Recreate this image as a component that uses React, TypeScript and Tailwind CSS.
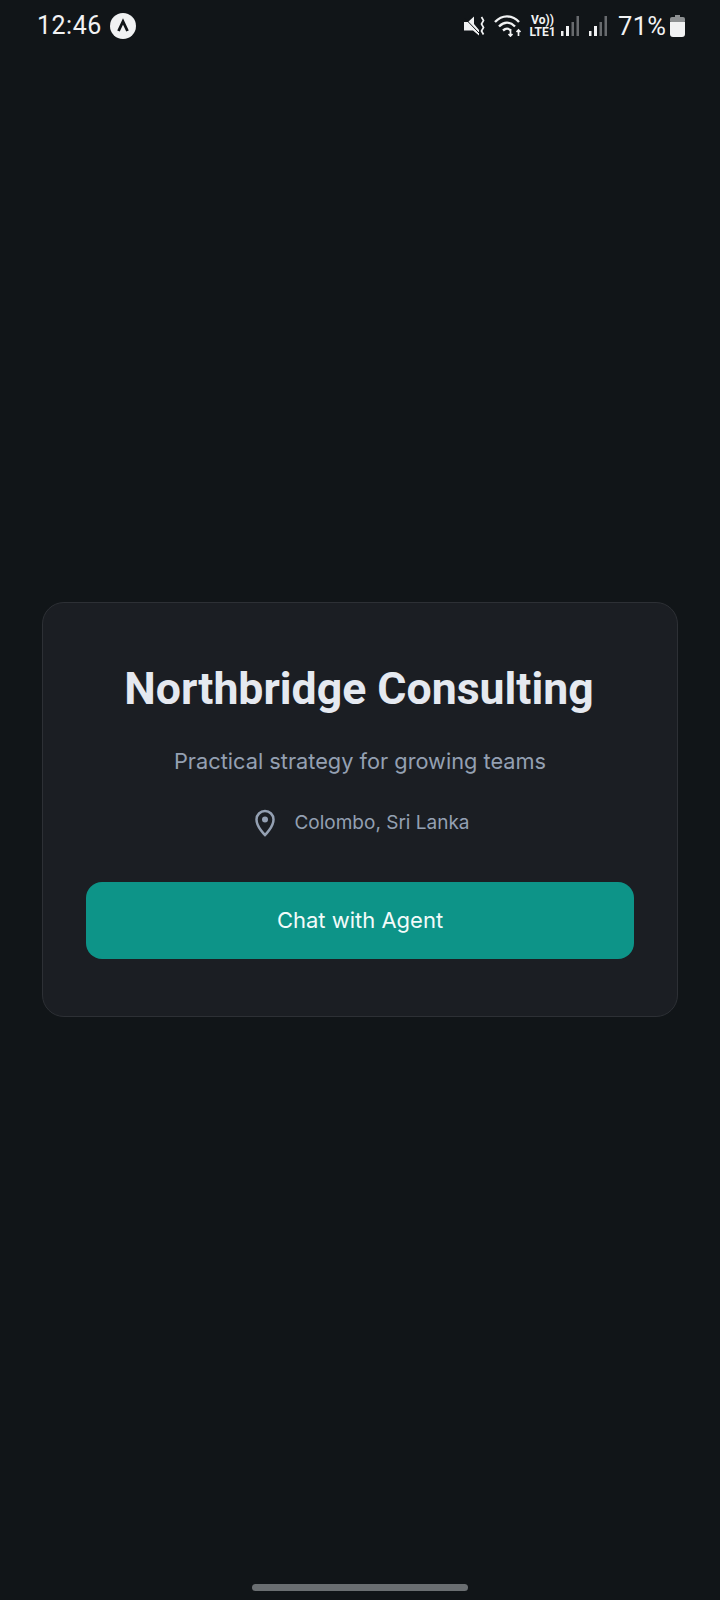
export default function App() {
  return (
    <div className="w-[720px] h-[1600px] bg-[#111518] flex flex-col overflow-hidden font-['Inter',sans-serif]">
      <div className="h-[48px] shrink-0 flex items-start justify-between pl-[37px] pr-[35px] pt-[11px] text-[#f1f2f3]">
        <div className="flex items-center gap-[8px]">
          <span className="font-['Roboto',sans-serif] text-[25px] leading-[30px] tracking-[0.5px]">12:46</span>
          <svg width="26" height="26" viewBox="0 0 26 26">
            <circle cx="13" cy="13" r="13" fill="#f1f2f3" />
            <path d="M8.500 18 L13 8.500 L17.500 18" fill="none" stroke="#111518" strokeWidth="2.800" />
          </svg>
        </div>
        <div className="flex items-center h-[30px]">
          <svg width="21" height="20" viewBox="0 0 21 20" className="mr-[9px]" fill="#f1f2f3">
            <path d="M0 6h4L10 0.500V8L15 14V19.500L9 14.500H0z" />
            <path d="M0.500 2L15 17" stroke="#111518" strokeWidth="1" />
            <path d="M17.500 1l2 3.500-2 3.500 2 3.500-2 3.500 2 3.500" fill="none" stroke="#f1f2f3" strokeWidth="1.700" />
          </svg>
          <svg width="29" height="22" viewBox="0 0 29 22" className="mr-[6px]" fill="none" stroke="#f1f2f3" strokeWidth="2.400">
            <path d="M1 7c7-7.500 17-7.500 24 0" />
            <path d="M5 11.500c5-5 11-5 16 0" />
            <path d="M9 15.500c3-2.500 5-2.500 8 0" />
            <path d="M16.500 15v6M14.500 19l2 2 2-2M24.500 21v-6M22.500 17l2-2 2 2" strokeWidth="1.700" />
          </svg>
          <div className="w-[27px] flex flex-col items-center font-['Roboto',sans-serif] font-bold text-[12px] leading-[12px] mr-[5px]">
            <span>Vo))</span>
            <span>LTE1</span>
          </div>
          <Signal />
          <div className="w-[10px]" />
          <Signal />
          <span className="w-[47px] font-['Roboto',sans-serif] text-[25.5px] leading-[30px] ml-[11px] mr-[5px] tracking-[0.3px]">71%</span>
          <svg width="15" height="22" viewBox="0 0 15 22" fill="#f1f2f3">
            <rect x="5" y="0" width="5" height="3" fill="#8d9092" />
            <rect x="0" y="2" width="15" height="6" rx="2" fill="#8d9092" />
            <path d="M0 7h15v12a3 3 0 0 1-3 3H3a3 3 0 0 1-3-3z" />
          </svg>
        </div>
      </div>

      <main className="flex-1 flex items-center justify-center">
        <div className="w-[636px] h-[415px] bg-[#1b1e23] border border-[#2d3035] rounded-[22px] px-[43px] flex flex-col items-center">
          <h1 className="mt-[58px] pr-[2px] font-['Roboto',sans-serif] font-bold text-[44.6px] leading-[56px] text-[#e5e9f0]">Northbridge Consulting</h1>
          <p className="mt-[28px] text-[21.75px] leading-[32px] text-[#94a0b2]">Practical strategy for growing teams</p>
          <div className="mt-[32px] pl-[3px] flex items-center gap-[17px] text-[#94a0b2]">
            <svg width="24" height="28" viewBox="0 0 24 28" fill="none" stroke="currentColor" strokeWidth="2.500">
              <path d="M12 26C12 26 3.500 18 3.500 10.500a8.500 8.500 0 0 1 17 0C20.500 18 12 26 12 26z" />
              <circle cx="12" cy="10.500" r="3" fill="currentColor" stroke="none" />
            </svg>
            <span className="text-[19px] leading-[28px]">Colombo, Sri Lanka</span>
          </div>
          <button className="mt-[45px] w-[548px] h-[77px] shrink-0 rounded-[16px] bg-[#0d9488] text-[#f3fbfa] text-[22px]">
            Chat with Agent
          </button>
        </div>
      </main>

      <div className="h-[30px] shrink-0 flex justify-center pt-[14px]">
        <div className="w-[216px] h-[7px] rounded-full bg-[#6a6e71]" />
      </div>
    </div>
  );
}

function Signal() {
  return (
    <svg width="18" height="21" viewBox="0 0 18 21">
      <rect x="0" y="15" width="2.500" height="5" fill="#f1f2f3" />
      <rect x="5" y="10" width="3" height="10" fill="#f1f2f3" />
      <rect x="10.500" y="6" width="2.500" height="14" fill="#686b6e" />
      <rect x="15.500" y="0" width="2.500" height="20" fill="#686b6e" />
    </svg>
  );
}
